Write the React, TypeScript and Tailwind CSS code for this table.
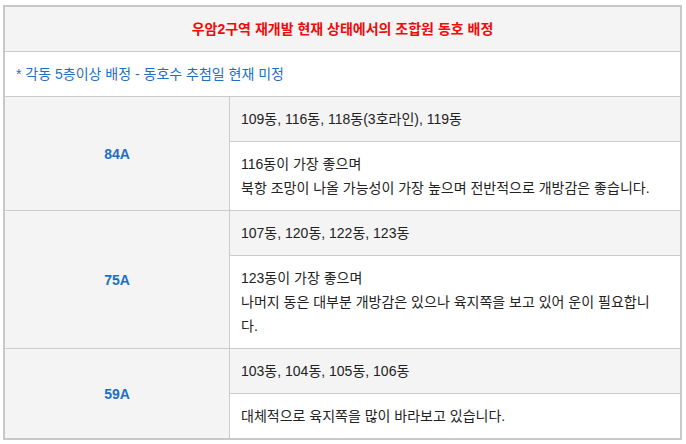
import React from "react";

const groups = [
  {
    label: "84A",
    dongs: "109동, 116동, 118동(3호라인), 119동",
    desc: ["116동이 가장 좋으며", "북항 조망이 나올 가능성이 가장 높으며 전반적으로 개방감은 좋습니다."],
  },
  {
    label: "75A",
    dongs: "107동, 120동, 122동, 123동",
    desc: ["123동이 가장 좋으며", "나머지 동은 대부분 개방감은 있으나 육지쪽을 보고 있어 운이 필요합니", "다."],
  },
  {
    label: "59A",
    dongs: "103동, 104동, 105동, 106동",
    desc: ["대체적으로 육지쪽을 많이 바라보고 있습니다."],
  },
];

export default function App() {
  return (
    <div
      className="bg-white w-[686px] h-[444px] pt-[5px] pl-[3px] text-[14px] leading-[24px] text-[#222]"
      style={{ fontFamily: '"Liberation Sans", "Noto Sans CJK KR", sans-serif' }}
    >
      <div className="w-[679px] border-2 border-[#c8c8c8]">
        <div className="h-[44px] bg-[#f4f4f4] flex items-center justify-center font-bold text-[#f00a0a]">
          우암2구역 재개발 현재 상태에서의 조합원 동호 배정
        </div>
        <div className="h-[45px] border-t border-[#cccccc] flex items-center px-[11px] text-[#1d6fc4]">
          * 각동 5층이상 배정 - 동호수 추첨일 현재 미정
        </div>
        {groups.map((g) => (
          <div key={g.label} className="flex border-t border-[#cccccc]">
            <div className="w-[225px] shrink-0 bg-[#f4f4f4] border-r border-[#cccccc] flex items-center justify-center font-bold text-[#1d6fc4]">
              {g.label}
            </div>
            <div className="flex-1 flex flex-col">
              <div className="bg-[#f4f4f4] py-[10px] px-[11px] whitespace-nowrap">{g.dongs}</div>
              <div className="border-t border-[#cccccc] py-[10px] px-[11px] whitespace-nowrap">
                {g.desc.map((d, i) => (
                  <div key={i}>{d}</div>
                ))}
              </div>
            </div>
          </div>
        ))}
      </div>
    </div>
  );
}
